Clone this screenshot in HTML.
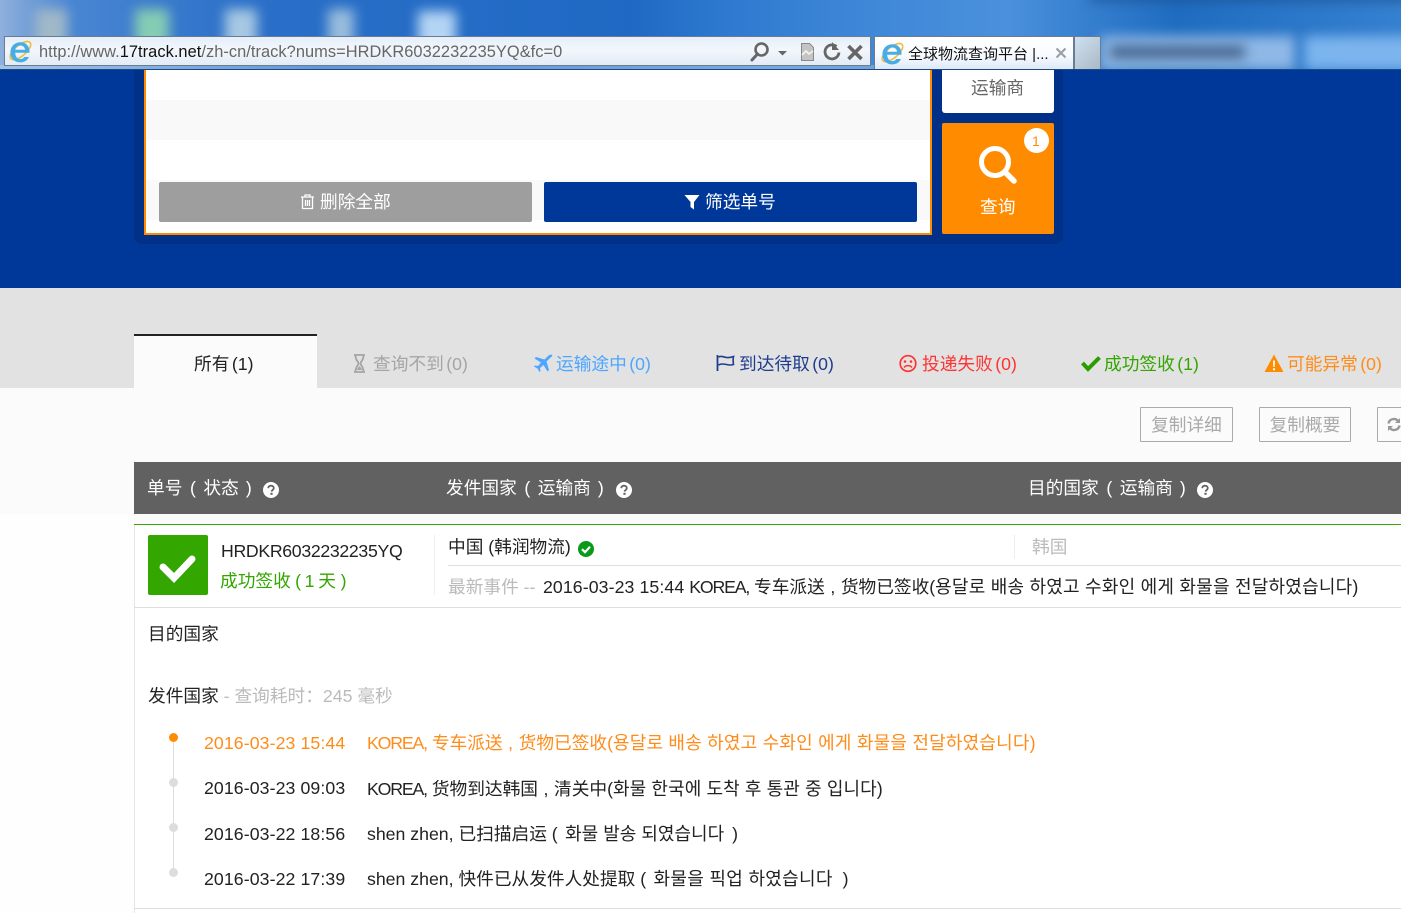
<!DOCTYPE html>
<html><head><meta charset="utf-8"><style>
html,body{margin:0;padding:0;background:#fefefe}
body{position:relative;width:1401px;height:913px;overflow:hidden;font-family:"Liberation Sans","Noto Sans CJK SC",sans-serif;font-size:17.7px;color:#222}
.a{position:absolute}
.t{position:absolute;white-space:nowrap;line-height:26px;height:26px}
svg{position:absolute;display:block;overflow:visible}
.blob{position:absolute;filter:blur(6px)}
.k{font-family:"Liberation Sans","Noto Sans CJK KR",sans-serif;font-size:18px}
.c{display:inline-block;width:16px;text-align:center}
.n{margin-left:2.500px}
.p1,.p2{display:inline-block;text-align:center}
.p1{width:21px}.p2{width:20px}
.d{letter-spacing:.1px}
.e{letter-spacing:-1.150px}
</style></head><body>

<!-- blurred desktop top -->
<div class="a" style="left:0;top:0;width:1401px;height:70px;overflow:hidden;background:linear-gradient(90deg,#8fb0dc 0,#4a86d2 5%,#2a6fc8 18%,#1f69c4 45%,#2f7ad0 52%,#3f88d8 62%,#4a90dc 72%,#1f6cc0 84%,#3580d0 100%)">
<div class="blob" style="left:35px;top:9px;width:32px;height:40px;background:#a0b8c8"></div>
<div class="blob" style="left:135px;top:9px;width:34px;height:40px;background:#86ccb4"></div>
<div class="blob" style="left:225px;top:9px;width:32px;height:40px;background:#a6c8e2"></div>
<div class="blob" style="left:328px;top:9px;width:26px;height:40px;background:#98bcdc"></div>
<div class="blob" style="left:418px;top:11px;width:38px;height:40px;background:#b4d4f4"></div>
<div class="blob" style="left:1090px;top:-8px;width:320px;height:8px;background:#1a4f90"></div>
<div class="blob" style="left:1100px;top:36px;width:195px;height:34px;background:#8fb8e6"></div>
<div class="blob" style="left:1110px;top:46px;width:135px;height:12px;background:#3f5f88"></div>
<div class="blob" style="left:1304px;top:36px;width:110px;height:34px;background:#7cb4ee"></div>
<div class="a" style="left:0;top:65px;width:1100px;height:4px;background:linear-gradient(90deg,#a4c2e6,#5f97d8 30%,#76a8e0 70%,#5f97d8)"></div>
</div>

<!-- address bar -->
<div class="a" style="left:4px;top:36px;width:865px;height:28px;border:1px solid #6b7c8e;background:linear-gradient(180deg,#e4eef9 0,#f3f7fc 45%,#e2ebf6 100%)"></div>
<svg style="left:8px;top:39px" width="24" height="24" viewBox="3 3 20 20"><ellipse cx="13.500" cy="13" rx="10.500" ry="4.500" fill="none" stroke="#f0c040" stroke-width="1.400" transform="rotate(-40 13 13)"/><path d="M5 14.500h16c0-6-3.200-8.800-7.500-8.800C8.600 5.700 5 9 5 14.500c0 5 3.600 8 8.200 8 3.400 0 6-1.500 7.200-4.500h-3.800c-.8 1.200-2 1.800-3.400 1.800-2.300 0-4-1.800-4.200-5.300zM9 12c.3-2.300 2-3.600 4.200-3.600s3.800 1.300 4 3.600z" fill="#48ade6" fill-rule="evenodd"/></svg>
<div class="t" style="left:39px;top:39px;font-size:16.4px;color:#666;letter-spacing:.05px">http://www.<span style="color:#111">17track.net</span>/zh-cn/track?nums=HRDKR6032232235YQ&amp;fc=0</div>
<svg style="left:748px;top:40px" width="122" height="24" viewBox="0 0 122 24"><circle cx="13.500" cy="9.500" r="6" fill="none" stroke="#666" stroke-width="2.600"/><path d="M9.500 14l-5.500 6" stroke="#666" stroke-width="3" stroke-linecap="round"/><path d="M30 11h9l-4.500 4.500z" fill="#666"/><path d="M53.500 3.500h8l4 4v13h-12z" fill="#c4c4c4" stroke="#888"/><path d="M54 15l4-4 3 3 4-3" fill="none" stroke="#f4f4f4" stroke-width="1.600"/><path d="M88.500 6.500a7 7 0 1 0 2.500 6" fill="none" stroke="#666" stroke-width="2.800"/><path d="M84 2v8h7z" fill="#666"/><path d="M100.500 6l13 13M113.500 6l-13 13" stroke="#666" stroke-width="3.600"/></svg>

<!-- tab -->
<div class="a" style="left:874px;top:36px;width:198px;height:33px;border:1px solid #6b7c8e;border-bottom:0;background:linear-gradient(180deg,#fff 0,#f8fbff 55%,#dbe8f7 100%)"></div>
<svg style="left:880px;top:41px" width="24" height="24" viewBox="3 3 20 20"><ellipse cx="13.500" cy="13" rx="10.500" ry="4.500" fill="none" stroke="#f0c040" stroke-width="1.400" transform="rotate(-40 13 13)"/><path d="M5 14.500h16c0-6-3.200-8.800-7.500-8.800C8.600 5.700 5 9 5 14.500c0 5 3.600 8 8.200 8 3.400 0 6-1.500 7.200-4.500h-3.800c-.8 1.200-2 1.800-3.400 1.800-2.300 0-4-1.800-4.200-5.300zM9 12c.3-2.300 2-3.600 4.200-3.600s3.800 1.300 4 3.600z" fill="#48ade6" fill-rule="evenodd"/></svg>
<div class="t" style="left:908px;top:42px;font-size:15px;color:#111">全球物流查询平台 |...</div>
<svg style="left:1055px;top:47px" width="12" height="12" viewBox="0 0 12 12"><path d="M1.500 1.500l9 9M10.500 1.500l-9 9" stroke="#9aa0a8" stroke-width="2.200"/></svg>
<div class="a" style="left:1074px;top:36px;width:25px;height:33px;border:1px solid #6b7c8e;border-bottom:0;background:linear-gradient(135deg,#cfe0f0,#a9b8c6)"></div>
<div class="a" style="left:0;top:69px;width:1401px;height:1px;background:#1c4a80"></div>

<!-- blue section -->
<div class="a" style="left:0;top:70px;width:1401px;height:218px;background:#00389a"></div>
<div class="a" style="left:134px;top:70px;width:929px;height:174px;background:#003087;border-radius:0 0 8px 8px"></div>
<div class="a" style="left:144px;top:70px;width:784px;height:163px;background:#fff;border:2px solid #ff8c00;border-top:0"></div>
<div class="a" style="left:146px;top:100px;width:784px;height:40px;background:#f9f9f9"></div>
<div class="a" style="left:146px;top:180px;width:784px;height:40px;background:#f9f9f9"></div>
<div class="a" style="left:159px;top:182px;width:373px;height:40px;background:#9e9e9e;border-radius:2px"></div>
<div class="a" style="left:544px;top:182px;width:373px;height:40px;background:#00389a;border-radius:2px"></div>
<svg style="left:300px;top:193px" width="15" height="17" viewBox="0 0 15 17"><path d="M1 4h13M5 4V2h5v2M2.500 4.500V15.500h10V4.500M5.500 7v6M7.500 7v6M9.500 7v6" fill="none" stroke="#fff" stroke-width="1.300"/></svg>
<div class="t" style="left:320px;top:189px;color:#fff">删除全部</div>
<svg style="left:684px;top:194px" width="16" height="16" viewBox="0 0 16 16"><path d="M.5 1h15L10 8v7.500L6.500 13V8z" fill="#fff"/></svg>
<div class="t" style="left:705px;top:189px;color:#fff">筛选单号</div>

<div class="a" style="left:942px;top:70px;width:112px;height:43px;background:#fff;border-radius:0 0 3px 3px"></div>
<div class="t" style="left:971px;top:75px;color:#666">运输商</div>
<div class="a" style="left:942px;top:123px;width:112px;height:111px;background:#ff8c00;border-radius:2px"></div>
<div class="a" style="left:1024px;top:128px;width:25px;height:25px;background:#fff;border-radius:50%"></div>
<div class="t" style="left:1032px;top:128px;font-size:14px;color:#ff8c00">1</div>
<svg style="left:977px;top:144px" width="42" height="42" viewBox="0 0 42 42"><circle cx="18" cy="18" r="13.500" fill="none" stroke="#fff" stroke-width="5"/><path d="M28 28l9 9" stroke="#fff" stroke-width="5.500" stroke-linecap="round"/></svg>
<div class="t" style="left:980px;top:194px;color:#fff">查询</div>

<!-- tabs -->
<div class="a" style="left:0;top:288px;width:1401px;height:100px;background:#e2e2e2"></div>
<div class="a" style="left:0;top:388px;width:1401px;height:126px;background:#fbfbfb"></div>
<div class="a" style="left:134px;top:514px;width:1267px;height:10px;background:#fbfbfb"></div>
<div class="a" style="left:134px;top:334px;width:183px;height:52px;background:#fbfbfb;border-top:2px solid #222"></div>
<div class="t" style="left:194px;top:351px;color:#222">所有<span class="n">(1)</span></div>

<svg style="left:352px;top:354px" width="15" height="19" viewBox="0 0 15 19"><path d="M2 1h11M2 18h11M3.500 1.500c0 5 3 6 3 8s-3 3-3 8M11.500 1.500c0 5-3 6-3 8s3 3 3 8" fill="none" stroke="#a5a5a5" stroke-width="1.800"/><path d="M4.500 16l3-4 3 4z" fill="#a5a5a5"/></svg>
<div class="t" style="left:373px;top:351px;color:#a5a5a5">查询不到<span class="n">(0)</span></div>

<svg style="left:533px;top:354px" width="20" height="19" viewBox="0 0 20 19"><path d="M19 1c-1-1-3 0-4.500 1.500L11.500 5.500 3 3 1.500 4.500 8 8.500 5 12l-3-.5L1 12.500l3.500 2 2 3.500 1-1L7 14l3.500-3 4 6.500L16 16l-2.500-8.500 3-3C18 3 20 2 19 1z" fill="#4da6ff"/></svg>
<div class="t" style="left:556px;top:351px;color:#4da6ff">运输途中<span class="n">(0)</span></div>

<svg style="left:716px;top:354px" width="20" height="18" viewBox="0 0 20 18"><path d="M1.500 1v16" stroke="#1f3d8f" stroke-width="1.800"/><path d="M2.500 3c3-1.500 5 0 8 .5 3 .5 5-.5 7-1-.5 2-.5 5 0 8-3 1-5 .5-7 0-3-.5-5-1-8 .5" fill="none" stroke="#1f3d8f" stroke-width="1.600"/></svg>
<div class="t" style="left:739px;top:351px;color:#1f3d8f">到达待取<span class="n">(0)</span></div>

<svg style="left:898px;top:354px" width="20" height="19" viewBox="0 0 20 19"><circle cx="10" cy="9.500" r="7.800" fill="none" stroke="#f33" stroke-width="1.700"/><circle cx="7" cy="7.500" r="1.300" fill="#f33"/><circle cx="13" cy="7.500" r="1.300" fill="#f33"/><path d="M6 13.500c2-2.500 6-2.500 8 0" fill="none" stroke="#f33" stroke-width="1.500"/></svg>
<div class="t" style="left:922px;top:351px;color:#f33">投递失败<span class="n">(0)</span></div>

<svg style="left:1081px;top:355px" width="20" height="17" viewBox="0 0 20 17"><path d="M1.500 8l5.500 6L18.500 2.500" fill="none" stroke="#2a9d00" stroke-width="4"/></svg>
<div class="t" style="left:1104px;top:351px;color:#33a600">成功签收<span class="n">(1)</span></div>

<svg style="left:1264px;top:354px" width="20" height="19" viewBox="0 0 20 19"><path d="M10 .5L19.500 18H.5z" fill="#ff8c00"/><path d="M9 6.500h2l-.3 6.500H9.300zM9 14.200h2v2H9z" fill="#fff"/></svg>
<div class="t" style="left:1287px;top:351px;color:#ff8c1a">可能异常<span class="n">(0)</span></div>

<!-- copy buttons -->
<div class="t" style="left:1140px;top:407px;width:91px;height:33px;line-height:35px;border:1px solid #aaa;color:#aaa;text-align:center;border-radius:1px">复制详细</div>
<div class="t" style="left:1259px;top:407px;width:90px;height:33px;line-height:35px;border:1px solid #aaa;color:#aaa;text-align:center;border-radius:1px">复制概要</div>
<div class="a" style="left:1377px;top:407px;width:40px;height:33px;border:1px solid #aaa;border-radius:1px"></div>
<svg style="left:1387px;top:417px" width="14" height="15" viewBox="0 0 14 15"><path d="M1.500 6.500a5.500 5.500 0 0 1 10-2M12.500 8.500a5.500 5.500 0 0 1-10 2" fill="none" stroke="#999" stroke-width="2.400"/><path d="M13 1v5H8zM1 14V9h5z" fill="#999"/></svg>

<!-- table head -->
<div class="a" style="left:134px;top:462px;width:1267px;height:52px;background:#616161"></div>
<div class="t" style="left:147px;top:475px;color:#fff">单号<span class="p1">(</span>状态<span class="p2">)</span></div>
<div class="t" style="left:446px;top:475px;color:#fff">发件国家<span class="p1">(</span>运输商<span class="p2">)</span></div>
<div class="t" style="left:1028px;top:475px;color:#fff">目的国家<span class="p1">(</span>运输商<span class="p2">)</span></div>
<svg style="left:263px;top:482px" width="16" height="16" viewBox="0 0 16 16"><circle cx="8" cy="8" r="8" fill="#fff"/><path d="M5.200 6.200C5.300 4.600 6.500 3.700 8 3.700s2.800.9 2.800 2.300c0 2-2.200 2-2.200 3.600" fill="none" stroke="#616161" stroke-width="1.800"/><rect x="7.400" y="10.800" width="2.200" height="2" fill="#616161"/></svg>
<svg style="left:616px;top:482px" width="16" height="16" viewBox="0 0 16 16"><circle cx="8" cy="8" r="8" fill="#fff"/><path d="M5.200 6.200C5.300 4.600 6.500 3.700 8 3.700s2.800.9 2.800 2.300c0 2-2.200 2-2.200 3.600" fill="none" stroke="#616161" stroke-width="1.800"/><rect x="7.400" y="10.800" width="2.200" height="2" fill="#616161"/></svg>
<svg style="left:1197px;top:482px" width="16" height="16" viewBox="0 0 16 16"><circle cx="8" cy="8" r="8" fill="#fff"/><path d="M5.200 6.200C5.300 4.600 6.500 3.700 8 3.700s2.800.9 2.800 2.300c0 2-2.200 2-2.200 3.600" fill="none" stroke="#616161" stroke-width="1.800"/><rect x="7.400" y="10.800" width="2.200" height="2" fill="#616161"/></svg>

<!-- row -->
<div class="a" style="left:134px;top:524px;width:1267px;height:389px;background:#fff;border-left:1px solid #e6e6e6;box-sizing:border-box"></div>
<div class="a" style="left:134px;top:524px;width:1267px;height:1px;background:#33a600"></div>
<div class="a" style="left:148px;top:535px;width:60px;height:60px;background:#33a600;border-radius:2px"></div>
<svg style="left:158px;top:552px" width="40" height="32" viewBox="0 0 40 32"><path d="M5 15l11 11L34 7" fill="none" stroke="#fff" stroke-width="7" stroke-linecap="round"/></svg>
<div class="t" style="left:221px;top:538px;color:#222;letter-spacing:-.32px">HRDKR6032232235YQ</div>
<div class="t" style="left:220px;top:568px;color:#33a600">成功签收<span style="letter-spacing:-.6px"> ( 1 </span>天<span style="letter-spacing:-.2px"> )</span></div>
<div class="a" style="left:434px;top:535px;width:1px;height:60px;background:#eee"></div>
<div class="a" style="left:448px;top:565px;width:953px;height:1px;background:#ddd"></div>
<div class="t" style="left:448px;top:534px;color:#222">中国 (韩润物流)</div>
<svg style="left:578px;top:541px" width="16" height="16" viewBox="0 0 16 16"><circle cx="8" cy="8" r="8" fill="#0a9a1a"/><path d="M4 8.200l3 3 5-5.500" fill="none" stroke="#fff" stroke-width="2.200"/></svg>
<div class="a" style="left:1014px;top:535px;width:1px;height:24px;background:#eee"></div>
<div class="t" style="left:1032px;top:534px;color:#bbb">韩国</div>
<div class="t" style="left:448px;top:574px;color:#bbb">最新事件 --</div>
<div class="t" style="left:543px;top:574px;color:#222"><span class="d">2016-03-23 15:44</span> <span class="e">KOREA,</span> 专车派送<span class="c">,</span>货物已签收(<span class="k" style="letter-spacing:.22px">용달로 배송 하였고 수화인 에게 화물을 전달하였습니다)</span></div>
<div class="a" style="left:134px;top:607px;width:1267px;height:1px;background:#ddd"></div>

<div class="t" style="left:148px;top:621px;color:#222">目的国家</div>
<div class="t" style="left:148px;top:683px;color:#222">发件国家<span style="color:#bbb"> - 查询耗时：245 毫秒</span></div>

<!-- timeline -->
<div class="a" style="left:173px;top:738px;width:1px;height:135px;background:#ddd"></div>
<div class="a" style="left:169px;top:733px;width:9px;height:9px;background:#ff8c00;border-radius:50%"></div>
<div class="a" style="left:169px;top:778px;width:9px;height:9px;background:#ddd;border-radius:50%"></div>
<div class="a" style="left:169px;top:823px;width:9px;height:9px;background:#ddd;border-radius:50%"></div>
<div class="a" style="left:169px;top:868px;width:9px;height:9px;background:#ddd;border-radius:50%"></div>

<div class="t d" style="left:204px;top:730px;color:#ff8c1a">2016-03-23 15:44</div>
<div class="t" style="left:367px;top:730px;color:#ff8c1a"><span class="e">KOREA,</span> 专车派送<span class="c">,</span>货物已签收(<span class="k" style="letter-spacing:.2px">용달로 배송 하였고 수화인 에게 화물을 전달하였습니다)</span></div>
<div class="t d" style="left:204px;top:775px;color:#222">2016-03-23 09:03</div>
<div class="t" style="left:367px;top:776px;color:#222"><span class="e">KOREA,</span> 货物到达韩国<span class="c">,</span>清关中(<span class="k" style="letter-spacing:.1px">화물 한국에 도착 후 통관 중 입니다)</span></div>
<div class="t d" style="left:204px;top:821px;color:#222">2016-03-22 18:56</div>
<div class="t" style="left:367px;top:821px;color:#222">shen zhen, 已扫描启运 ( <span class="k" style="margin-left:2.500px;margin-right:3px">화물 발송 되였습니다</span> )</div>
<div class="t d" style="left:204px;top:866px;color:#222">2016-03-22 17:39</div>
<div class="t" style="left:367px;top:866px;color:#222">shen zhen, 快件已从发件人处提取 ( <span class="k" style="letter-spacing:.3px;margin-left:2.500px">화물을 픽업 하였습니다</span> &nbsp;)</div>
<div class="a" style="left:134px;top:908px;width:1267px;height:1px;background:#ddd"></div>
</body></html>
